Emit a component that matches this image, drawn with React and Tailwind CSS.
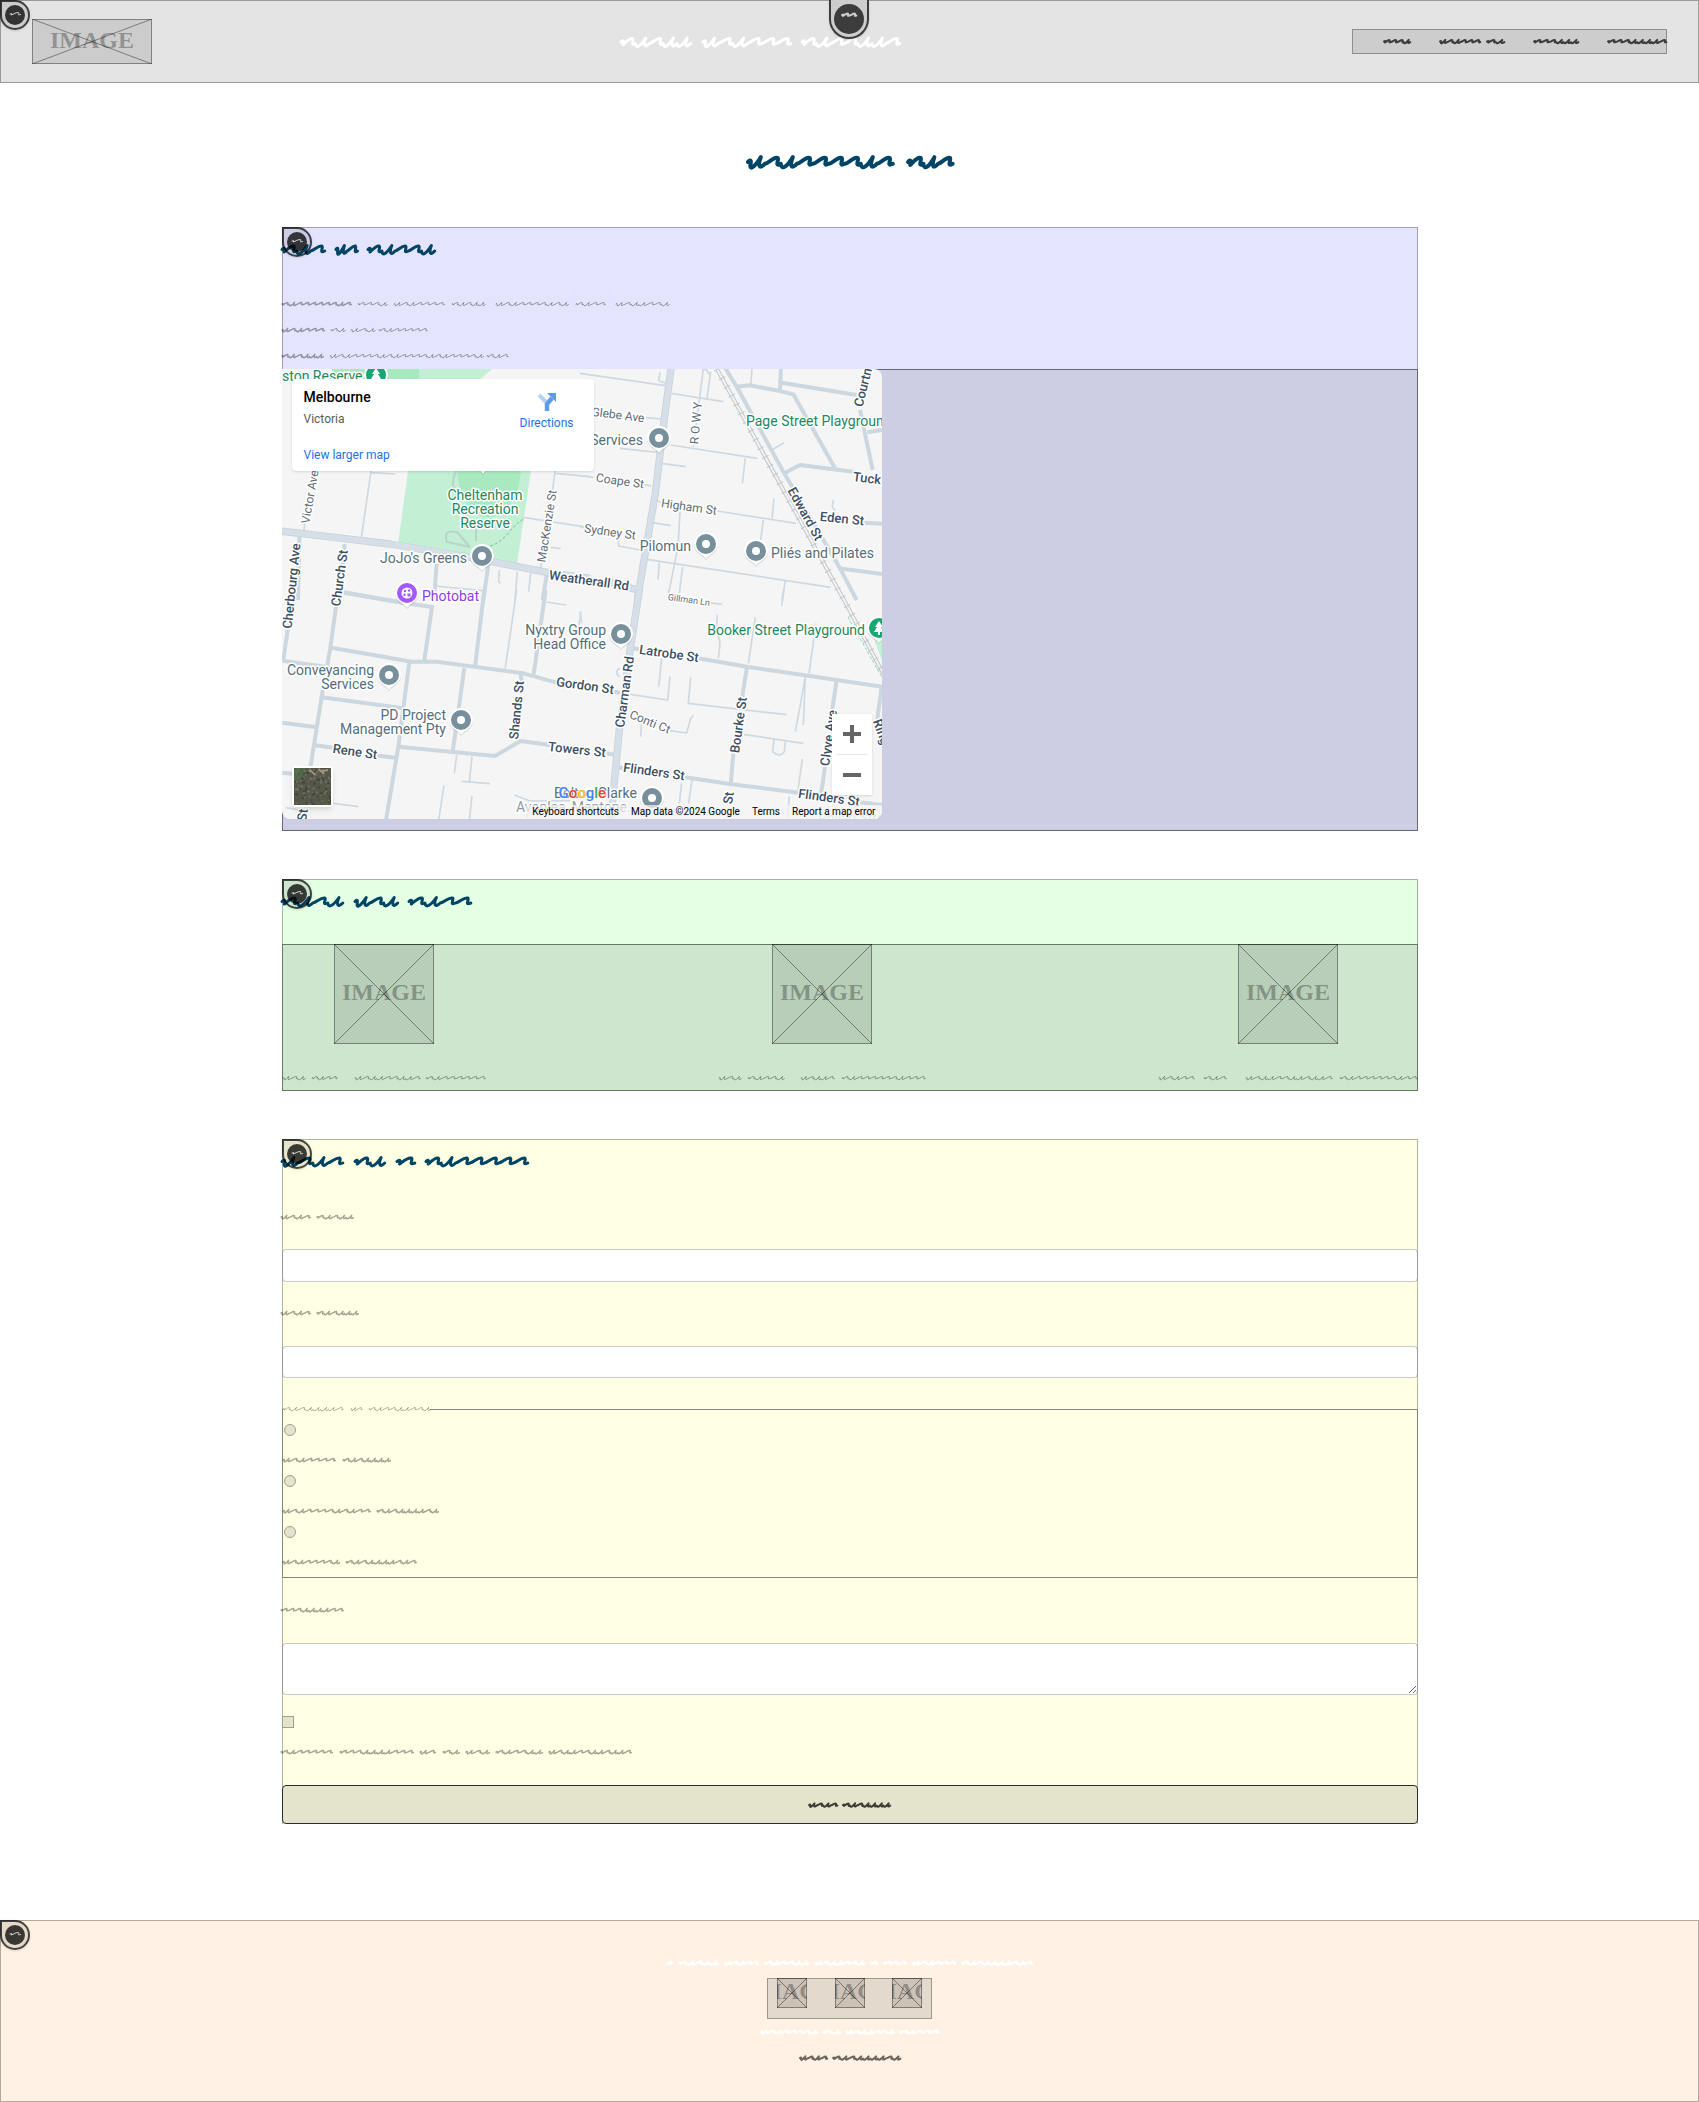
import React from "react";

/* Handwriting-like line: every word is a [start, width] pair in pixels. */
function wordPath(start, width, mid, amp, seed) {
  const count = Math.max(1, Math.round(width / (amp * 2.3 + 2.5)));
  const w = width / count;
  let d = `M${start} ${mid}q${w * 0.25} ${-amp * 0.7} ${w * 0.15} ${amp * 0.5}`;
  let x = start;
  for (let i = 0; i < count; i++) {
    const arc = count === 1 || (seed * 3 + i * i * 3 + i) % 7 < 4;
    const at = (fx, fy) => `${(x + w * fx).toFixed(1)} ${(mid + amp * fy).toFixed(1)}`;
    if (arc) {
      d += `C${at(0.3, 0.2)} ${at(0.6, -0.9)} ${at(0.85, -0.7)}C${at(1, -0.5)} ${at(0.6, 0.9)} ${at(1.05, 0.3)}`;
    } else {
      d += `C${at(0.1, 1.5)} ${at(0.45, 0.7)} ${at(0.8, -0.8)}C${at(0.6, 0.6)} ${at(0.7, 1.3)} ${at(1.05, 0.3)}`;
    }
    x += w;
  }
  return d;
}

function Scribble({ words, amp = 3, weight = 1, height = 26, className = "" }) {
  const last = words[words.length - 1];
  const width = last[0] + last[1];
  return (
    <svg
      className={`block shrink-0 overflow-visible ${className}`}
      width={width}
      height={height}
      fill="none"
      stroke="currentColor"
      strokeWidth={weight}
      strokeLinecap="round"
      strokeLinejoin="round"
      aria-hidden="true"
    >
      {words.map(([s, w, bold], i) => (
        <path key={i} d={wordPath(s, w, height / 2, amp, i + words.length)} strokeWidth={bold ? weight + 0.5 : weight} />
      ))}
    </svg>
  );
}

function Placeholder({ w, h, base }) {
  return (
    <svg className="block shrink-0" width={w} height={h}>
      <rect x="0.5" y="0.5" width={w - 1} height={h - 1} fill="rgba(0,0,0,0.1)" stroke="rgba(0,0,0,0.4)" />
      <text x={w / 2} y={base} textAnchor="middle" fontFamily="'Liberation Serif', serif" fontWeight="700" fontSize="24" fill="rgba(0,0,0,0.3)">
        IMAGE
      </text>
      <path d={`M0 0L${w} ${h}M${w} 0L0 ${h}`} stroke="rgba(0,0,0,0.4)" strokeWidth="1" />
    </svg>
  );
}

function Badge() {
  return (
    <span className="absolute -left-px -top-px flex h-[30px] w-[30px] items-center justify-center rounded-full rounded-tl-none border-2 border-black/70 bg-black/10 shadow">
      <span className="flex h-5 w-5 justify-center rounded-full bg-black/75 pt-1 text-white/80">
        <Scribble words={[[0, 10]]} amp={2} weight={1} height={10} />
      </span>
    </span>
  );
}

function SectionHeading({ words }) {
  return (
    <h2 className="-ml-px text-[#004466]">
      <Scribble words={words} amp={5} weight={3} height={43} />
    </h2>
  );
}

/* The street plan is drawn as four tiles, each at three units to the pixel. */
const tiles = [
  {
    t: "translate(-12 -9) scale(0.33333)",
    major: ["M30 513L200 533L360 552L600 592L835 638L960 655"],
    mid: [
      "M88 530L84 720", "M224 552L215 640L205 720", "M222 697L400 728", "M500 612L495 680L490 720",
      "M655 615L640 720", "M830 645L818 720",
    ],
    thin: ["M303 333L273 540M303 338L376 342", "M105 490L100 520", "M495 678L638 692", "M688 630L686 665L692 670M742 635L735 720M782 640L776 695", "M855 333L848 390M855 340L960 350", "M760 472L940 500", "M815 605L810 630M842 562L872 566"],
  },
  {
    t: "translate(298 -9) scale(0.33333)",
    major: ["M274 20L255 160L226 400L172 720", "M90 665L172 690"],
    mid: [
      "M433 20L470 80L610 335L780 625L830 720", "M470 80L510 76L595 92L640 103L765 325", "M603 20L600 92M605 68L830 105",
      "M612 340L660 315L820 335", "M840 150L878 330M862 217L906 210", "M850 488L906 491", "M775 625L906 642",
    ],
    thin: ["M0 40L256 77M240 36L236 62L258 70M274 100L430 125M370 27L340 260M392 35L381 115M366 27L380 30L392 48M516 27L512 75", "M198 173L242 177M272 255L532 295M496 295L487 370M120 265L240 278M242 310L318 320", "M575 270L612 248M760 420L757 440L765 452", "M0 347L40 352M190 373L214 378M228 423L245 426M412 453L648 490M582 415L576 475M550 480L542 540M218 488L272 497M300 455L294 560L265 705M0 500L20 505M115 540L116 558L180 570", "M200 598L752 682M238 608L234 658M308 620L298 700M616 663L606 720"],
  },
  {
    t: "translate(-12 221) scale(0.33333)",
    major: [],
    mid: [
      "M205 0L180 180L155 320L120 540", "M70 0L40 210M37 212L165 230", "M222 8L380 35L480 50", "M487 45L463 210",
      "M185 173L425 215L500 215L760 250L860 278", "M643 0L615 230M827 0L790 260", "M418 215L385 470L348 690", "M583 235L548 485",
      "M155 322L400 355M37 398L140 412M137 466L190 473M310 495L375 503", "M385 470L675 498L752 453L840 465", "M37 548L70 551M752 250L755 275",
    ],
    thin: ["M740 0L705 240", "M830 36L888 45M933 65L926 110", "M560 495L553 550M606 500L598 575M575 574L660 581M522 587L506 690M606 618L598 690", "M190 640L265 650M47 653L90 660", "M733 615L780 633L900 632M775 640L770 690"],
  },
  {
    t: "translate(298 221) scale(0.33333)",
    major: ["M178 0L152 170L118 420L92 690"],
    mid: [
      "M160 175L190 180M355 205L500 230L690 258L906 290", "M502 225L485 330M460 490L452 585", "M770 270L755 370M735 530L722 620", "M80 490L105 495M105 530L130 535M315 562L450 582L655 608M840 637L906 645M905 290L890 400", "M100 305L120 308",
    ],
    thin: ["M265 0L268 15M385 38L427 43M612 0L605 48M0 65L5 100M412 73L408 130C425 150 420 160 415 205M526 82L505 220M708 100L687 250", "M245 205L236 290M270 260L263 330L150 313M332 263L325 340L620 374", "M676 260L660 350L646 425M676 260L670 405M490 433L670 460M582 450L578 485Q600 505 613 485L616 455", "M270 422L320 429L332 385L340 377M185 395L182 440M118 260Q100 245 120 235", "M667 507L654 600M628 620L622 690M305 580L298 640M336 570L326 640"],
  },
];

const G = "#1b8860";
const P = "#546e7a";
const S = "#5f6b76";
const D = "#3c4f63";
/* text, x, y, anchor, rotation, size, colour, weight */
const labels = [
  ["ston Reserve", 0, 12, "start", 0, 14, G],
  ["Cheltenham", 203, 131, "middle", 0, 14, G],
  ["Recreation", 203, 145, "middle", 0, 14, G],
  ["Reserve", 203, 159, "middle", 0, 14, G],
  ["Page Street Playground", 464, 57, "start", 0, 14, G],
  ["Booker Street Playground", 583, 266, "end", 0, 14, G],
  ["JoJo's Greens", 185, 194, "end", 0, 14, P],
  ["Photobat", 140, 232, "start", 0, 14, "#8a3fe0"],
  ["Nyxtry Group", 324, 266, "end", 0, 14, P],
  ["Head Office", 324, 280, "end", 0, 14, P],
  ["Conveyancing", 92, 306, "end", 0, 14, P],
  ["Services", 92, 320, "end", 0, 14, P],
  ["PD Project", 164, 351, "end", 0, 14, P],
  ["Management Pty", 164, 365, "end", 0, 14, P],
  ["Services", 361, 76, "end", 0, 14, P],
  ["Pilomun", 409, 182, "end", 0, 14, P],
  ["Pliés and Pilates", 489, 189, "start", 0, 14, P],
  ["Bolton Clarke", 355, 429, "end", 0, 14, P],
  ["Avonlea, Mentone...", 234, 443, "start", 0, 14, "#8b9ba5"],
  ["Phillip Street", 536, 454, "start", 0, 14, "#a5d3bf"],
  ["Victor Ave", 28, 128, "middle", -80, 12, S],
  ["Cherbourg Ave", 10, 217, "middle", -84, 13, D, 500],
  ["Church St", 58, 209, "middle", -82, 13, D, 500],
  ["MacKenzie St", 265, 157, "middle", -81, 12, S],
  ["Glebe Ave", 336, 46, "middle", 7, 12, S],
  ["Coape St", 338, 112, "middle", 8, 12, S],
  ["Higham St", 407, 138, "middle", 8, 12, S],
  ["Sydney St", 328, 163, "middle", 8, 12, S],
  ["Weatherall Rd", 307, 212, "middle", 8, 13, D, 500],
  ["R O W Y", 414, 54, "middle", -85, 12, S],
  ["Edward St", 523, 145, "middle", 61, 13, D, 500],
  ["Eden St", 560, 150, "middle", 6, 13, D, 500],
  ["Tuck", 571, 108, "start", 7, 13, D, 500],
  ["Courtney", 583, 12, "middle", -76, 13, D, 500],
  ["Gillman Ln", 407, 230, "middle", 8, 9, S],
  ["Latrobe St", 387, 285, "middle", 8, 13, D, 500],
  ["Charman Rd", 343, 323, "middle", -82, 13, D, 500],
  ["Gordon St", 303, 317, "middle", 8, 13, D, 500],
  ["Conti Ct", 368, 353, "middle", 22, 12, S],
  ["Towers St", 295, 381, "middle", 6, 13, D, 500],
  ["Flinders St", 372, 403, "middle", 8, 13, D, 500],
  ["Bourke St", 457, 356, "middle", -82, 13, D, 500],
  ["Clyve Ave", 547, 369, "middle", -82, 13, D, 500],
  ["Flinders St", 547, 429, "middle", 8, 13, D, 500],
  ["St", 447, 429, "middle", -82, 13, D, 500],
  ["Ring", 599, 363, "middle", 70, 13, D, 500],
  ["Shands St", 235, 341, "middle", -84, 13, D, 500],
  ["Rene St", 73, 383, "middle", 8, 13, D, 500],
  ["St", 21, 446, "middle", -82, 13, D, 500],
];

const pins = [
  [200, 187], [377, 69], [424, 175], [474, 182], [339, 265], [370, 429], [107, 306], [179, 351],
  [125, 224, "photo"], [94, 6, "tree"], [597, 259, "tree"], [201, 90, "tree"],
];

function Pin({ x, y, kind }) {
  const fill = kind === "photo" ? "#a259ff" : kind === "tree" ? "#1aa672" : "#78909c";
  return (
    <g transform={`translate(${x} ${y})`}>
      <path d="M0 15C-3 10-12 8-12 0A12 12 0 0 1 12 0C12 8 3 10 0 15Z" fill="#000" opacity="0.15" transform="translate(0 1)" />
      <path d="M0 15C-3 10-12 8-12 0A12 12 0 0 1 12 0C12 8 3 10 0 15Z" fill="#fff" />
      <circle r="10" fill={fill} />
      {!kind && <circle r="4" fill="#fff" />}
      {kind === "tree" && <path d="M0-7L4-1H2L5 4H1V7H-1V4H-5L-2-1H-4Z" fill="#fff" />}
      {kind === "photo" && (
        <g>
          <circle r="5.5" fill="#fff" />
          <circle cx="-2" cy="-2" r="1.2" fill={fill} />
          <circle cx="2" cy="-2.5" r="1.2" fill={fill} />
          <circle cx="-2.5" cy="1.8" r="1.2" fill={fill} />
          <rect x="0.5" y="0.5" width="3" height="3" fill={fill} />
        </g>
      )}
    </g>
  );
}

function MapDrawing() {
  return (
    <svg className="block h-full w-full" viewBox="0 0 600 450" aria-hidden="true">
      <rect width="600" height="450" fill="#f5f5f5" />
      <path d="M50 0H210L196 12L249 102L235 195L116 175L126 102V12H50Z" fill="#c3f0d5" />
      <path d="M50 0H137V12H50Z" fill="#a8e9c0" />
      <ellipse cx="207" cy="98" rx="32" ry="50" fill="#a8e9c0" />
      <path d="M600 262L592 270L600 292Z" fill="#c3f0d5" />
      {tiles.map((tile) => (
        <g key={tile.t} transform={tile.t} fill="none" strokeLinejoin="round">
          <g stroke="#cdd9e3" strokeWidth="5">{tile.thin.map((d) => <path key={d} d={d} />)}</g>
          <g stroke="#ccd7df" strokeWidth="12">{tile.mid.map((d) => <path key={d} d={d} />)}</g>
          <g stroke="#c4d0da" strokeWidth="22">{tile.major.map((d) => <path key={d} d={d} />)}</g>
          <g stroke="#d6dfe7" strokeWidth="18">{tile.major.map((d) => <path key={d} d={d} />)}</g>
        </g>
      ))}
      <g fill="none" stroke="#c3c7ca">
        <path d="M435 0L508 133L562 231L602 306" strokeWidth="4" />
        <path d="M435 0L508 133L562 231L602 306" stroke="#f3f3f3" strokeWidth="2" />
        <path d="M435 0L508 133L562 231L602 306" strokeWidth="7" strokeDasharray="1 9" />
        <path d="M566 248L602 312" stroke="#8fd8b4" strokeDasharray="3 2" />
      </g>
      <path d="M188 178L165 173Q160 160 175 163L188 178M194 172V155M174 102Q168 115 174 125" fill="none" stroke="#b9d3cb" strokeWidth="2" />
      <path d="M208 177C225 172 230 155 242 150" fill="none" stroke="#7dbd9c" strokeDasharray="3 2" />
      {pins.map(([x, y, kind]) => <Pin key={`${x}-${y}`} x={x} y={y} kind={kind} />)}
      <g fontFamily="Roboto, sans-serif" stroke="#fff" strokeWidth="3" strokeLinejoin="round" paintOrder="stroke">
        {labels.map(([text, x, y, anchor, r, size, fill, weight]) => (
          <text
            key={`${text}-${x}`}
            transform={`translate(${x} ${y}) rotate(${r})`}
            dy={r ? 4 : 0}
            textAnchor={anchor}
            fontSize={size}
            fontWeight={weight || 400}
            fill={fill}
          >
            {text}
          </text>
        ))}
      </g>
    </svg>
  );
}

function SatelliteThumb() {
  const specks = Array.from({ length: 150 }, (_, i) => [(i * 17 + ((i * i) % 7)) % 38, (i * 23 + ((i * i) % 11)) % 38, i % 5]);
  const tones = ["#3c4238", "#6c6a5c", "#4f5f42", "#7b7565", "#464a3e"];
  return (
    <svg className="block h-full w-full" viewBox="0 0 38 38" aria-hidden="true">
      <rect width="38" height="38" fill="#55574a" />
      {specks.map(([x, y, t], i) => <rect key={i} x={x} y={y} width="2" height="2" fill={tones[t]} />)}
      <path d="M0 0H12L8 10L0 14Z" fill="#4f7a48" opacity="0.5" />
      <path d="M16 2L22 7M25 1L31 6M28 3L35 2" stroke="#c4ad92" strokeWidth="2" opacity="0.7" />
    </svg>
  );
}

function MapEmbed() {
  return (
    <div className="relative -mt-px -ml-px h-[450px] w-full max-w-[600px] overflow-hidden rounded-lg rounded-tl-none font-['Roboto',sans-serif] text-xs">
      <MapDrawing />
      <div className="absolute left-2.5 top-2.5 flex h-[92px] w-[302px] justify-between rounded-sm bg-white px-3 py-2.5 shadow">
        <div className="flex flex-col">
          <strong className="text-sm leading-4 font-medium text-black">Melbourne</strong>
          <span className="mt-1.5 leading-4 text-[#5b5b5b]">Victoria</span>
          <a href="#map" className="mt-auto leading-3 text-[#1a73e8]">View larger map</a>
        </div>
        <a href="#directions" className="mr-2 flex flex-col items-center pt-1 text-[#1a73e8]">
          <svg width="18" height="18" fill="none" aria-hidden="true">
            <path d="M1 2L8 9" stroke="#b4d1f6" strokeWidth="4" />
            <path d="M9 18V11L14 5" stroke="#5f9ce8" strokeWidth="4.5" />
            <path d="M9 0H18V9Z" fill="#5f9ce8" />
          </svg>
          <span className="mt-1 leading-4">Directions</span>
        </a>
      </div>
      <button type="button" className="absolute bottom-3 left-2.5 h-[41px] w-[41px] rounded-sm border-2 border-white shadow-md">
        <SatelliteThumb />
      </button>
      <div className="absolute bottom-6 right-2.5 flex w-10 flex-col items-center bg-white shadow">
        <button type="button" className="flex h-10 w-10 items-center justify-center">
          <svg width="18" height="18" aria-hidden="true"><path d="M9 0V18M0 9H18" stroke="#666" strokeWidth="4" /></svg>
        </button>
        <hr className="w-[30px] border-[#e6e6e6]" />
        <button type="button" className="flex h-10 w-10 items-center justify-center">
          <svg width="18" height="18" aria-hidden="true"><path d="M0 9H18" stroke="#666" strokeWidth="4" /></svg>
        </button>
      </div>
      <span className="absolute bottom-4 left-[277px] text-[15px] leading-5 font-medium [text-shadow:0_0_2px_white,0_0_2px_white]">
        <span className="text-[#4285f4]">G</span>
        <span className="text-[#ea4335]">o</span>
        <span className="text-[#fbbc04]">o</span>
        <span className="text-[#4285f4]">g</span>
        <span className="text-[#34a853]">l</span>
        <span className="text-[#ea4335]">e</span>
      </span>
      <div className="absolute bottom-0 right-0 flex h-3.5 gap-3 bg-[#f5f5f5]/70 px-1.5 text-[10px] leading-[14px] text-black">
        <button type="button">Keyboard shortcuts</button>
        <span>Map data ©2024 Google</span>
        <a href="#terms">Terms</a>
        <a href="#report">Report a map error</a>
      </div>
    </div>
  );
}

function FieldLabel({ id, words, className = "" }) {
  return (
    <label htmlFor={id} className={`-ml-px block text-black/35 ${className}`}>
      <Scribble words={words} amp={2} weight={1.5} />
    </label>
  );
}

const navItems = [
  [[0, 26]],
  [[0, 40], [47, 17]],
  [[0, 44]],
  [[0, 58]],
];

const profiles = [
  [[0, 22], [29, 25], [72, 65], [143, 59]],
  [[0, 22], [29, 36], [82, 33], [123, 83]],
  [[0, 35], [45, 22], [87, 86], [181, 77]],
];

const topics = [
  ["topic-a", [[0, 52], [60, 47]]],
  ["topic-b", [[0, 87], [94, 61]]],
  ["topic-c", [[0, 56], [63, 70]]],
];

export default function App() {
  return (
    <div className="bg-white">
      <header className="relative flex items-center justify-between border border-[#9a9a9a] bg-[#e4e4e4] py-[18px] pr-[31px] pl-[31px]">
        <Badge />
        <Placeholder w={120} h={45} base={29} />
        <div className="pl-4 text-white">
          <Scribble words={[[0, 69], [82, 87], [181, 97]]} amp={5} weight={3} height={40} />
        </div>
        <nav className="flex h-[25px] items-center gap-[30px] border border-[#8e8e8e] bg-[#cdcdcd] pl-[31px] text-[#3c3c3c]">
          {navItems.map((words, i) => (
            <a key={i} href="#page">
              <Scribble words={words} amp={2} weight={2} height={23} />
            </a>
          ))}
        </nav>
        <span className="absolute -top-px left-1/2 -ml-[21px] flex h-[39px] w-10 justify-center rounded-b-full border-2 border-t-0 border-[#3c3c3c] bg-[#cdcdcd] pt-1 shadow">
          <span className="flex h-[30px] w-[30px] justify-center rounded-full bg-[#3c3c3c] pt-1 text-[#cdcdcd]">
            <Scribble words={[[0, 14]]} amp={2} weight={2} height={14} />
          </span>
        </span>
      </header>

      <main className="mx-auto w-full max-w-[1200px] px-8">
        <h1 className="flex justify-center pt-[58px] pb-[44px] text-[#004466]">
          <Scribble words={[[0, 144], [160, 44]]} amp={6} weight={4} height={42} />
        </h1>

        <section className="relative border border-[#a0a0b4] bg-[#e4e4ff]">
          <SectionHeading words={[[0, 42], [54, 21], [86, 66]]} />
          <div className="-ml-px mt-5 text-black/35">
            <Scribble words={[[0, 69, true], [76, 29], [112, 50], [170, 33], [214, 72], [294, 29], [334, 53]]} amp={2} />
            <Scribble words={[[0, 42, true], [49, 14], [69, 24], [97, 48]]} amp={2} />
            <Scribble words={[[0, 41, true], [48, 153], [205, 21]]} amp={2} />
          </div>
          <div className="-mx-px -mb-px border border-[#66667a] bg-[#cdcde4] pb-[11px]">
            <MapEmbed />
          </div>
          <Badge />
        </section>

        <section className="relative mt-12 border border-[#a0b4a0] bg-[#e4ffe4]">
          <SectionHeading words={[[0, 60], [73, 42], [127, 61]]} />
          <div className="-mx-px -mb-px mt-[21px] flex justify-between border border-[#667a66] bg-[#cde6cd]">
            {profiles.map((words, i) => (
              <figure key={i} className="-mt-px flex flex-col items-center">
                <Placeholder w={100} h={100} base={56} />
                <figcaption className="mt-[21px] mb-[-1px] text-black/35">
                  <Scribble words={words} amp={2} />
                </figcaption>
              </figure>
            ))}
          </div>
          <Badge />
        </section>

        <section className="relative mt-12 border border-b-0 border-[#b4b4a0] bg-[#ffffe4]">
          <SectionHeading words={[[0, 60], [73, 29], [115, 17], [144, 101]]} />
          <form className="-mx-px" onSubmit={(e) => e.preventDefault()}>
            <FieldLabel id="name" className="pt-[21px] pb-[19px]" words={[[0, 29], [36, 36]]} />
            <input id="name" type="text" className="block h-[33px] w-full rounded border border-x-[#999] border-y-[#ccc] bg-white px-2" />
            <FieldLabel id="email" className="pt-[18px] pb-5" words={[[0, 29], [36, 41]]} />
            <input id="email" type="email" className="block h-8 w-full rounded border border-x-[#999] border-y-[#ccc] bg-white px-2" />
            <fieldset className="mt-[18px] border border-[#85857d] pb-0.5">
              <legend className="text-black/30">
                <Scribble words={[[0, 60], [68, 11], [86, 61]]} amp={2} />
              </legend>
              {topics.map(([id, words]) => (
                <div key={id} className="pt-0.5">
                  <input id={id} type="radio" name="topic" className="ml-px block h-3 w-3 appearance-none rounded-full border border-[#a0a08e] bg-[#e4e4cd]" />
                  <label htmlFor={id} className="block pt-[11px] text-black/35">
                    <Scribble words={words} amp={2} weight={1.5} />
                  </label>
                </div>
              ))}
            </fieldset>
            <FieldLabel id="message" className="pt-[19px] pb-5" words={[[0, 62]]} />
            <textarea id="message" className="block h-[52px] w-full rounded border border-x-[#999] border-y-[#ccc] bg-white px-2" />
            <input id="updates" type="checkbox" className="mt-[21px] block h-3 w-3 appearance-none border border-[#a0a08e] bg-[#e4e4cd]" />
            <FieldLabel id="updates" className="pt-[11px] pb-5" words={[[0, 51], [59, 73], [139, 15], [162, 16], [185, 23], [215, 46], [268, 82]]} />
            <button type="submit" className="flex h-[39px] w-full items-center justify-center rounded border border-[#2d2d2d] bg-[#e4e4cd] text-[#3c3c34]">
              <Scribble words={[[0, 28], [34, 47]]} amp={2} weight={2} height={20} />
            </button>
          </form>
          <Badge />
        </section>
      </main>

      <footer className="relative mt-24 flex flex-col items-center border border-[#b4a89c] bg-[#fff2e4] pt-[29px] pb-[30px]">
        <Badge />
        <div className="text-white">
          <Scribble words={[[0, 4], [11, 39], [57, 33], [97, 43], [147, 49], [203, 6], [216, 22], [245, 42], [294, 70]]} amp={2} weight={2} />
        </div>
        <div className="mt-0.5 flex h-[41px] w-[165px] justify-between border border-[#a0968e] bg-[#e4d9cd] px-[9px]">
          {[0, 1, 2].map((i) => (
            <a key={i} href="#social" className="-mt-px">
              <Placeholder w={30} h={30} base={21} />
            </a>
          ))}
        </div>
        <div className="text-white">
          <Scribble words={[[0, 56], [62, 17], [85, 48], [139, 38]]} amp={2} weight={2} />
        </div>
        <a href="#top" className="text-[#6b655f]">
          <Scribble words={[[0, 27], [33, 67]]} amp={2} weight={2} />
        </a>
      </footer>
    </div>
  );
}
